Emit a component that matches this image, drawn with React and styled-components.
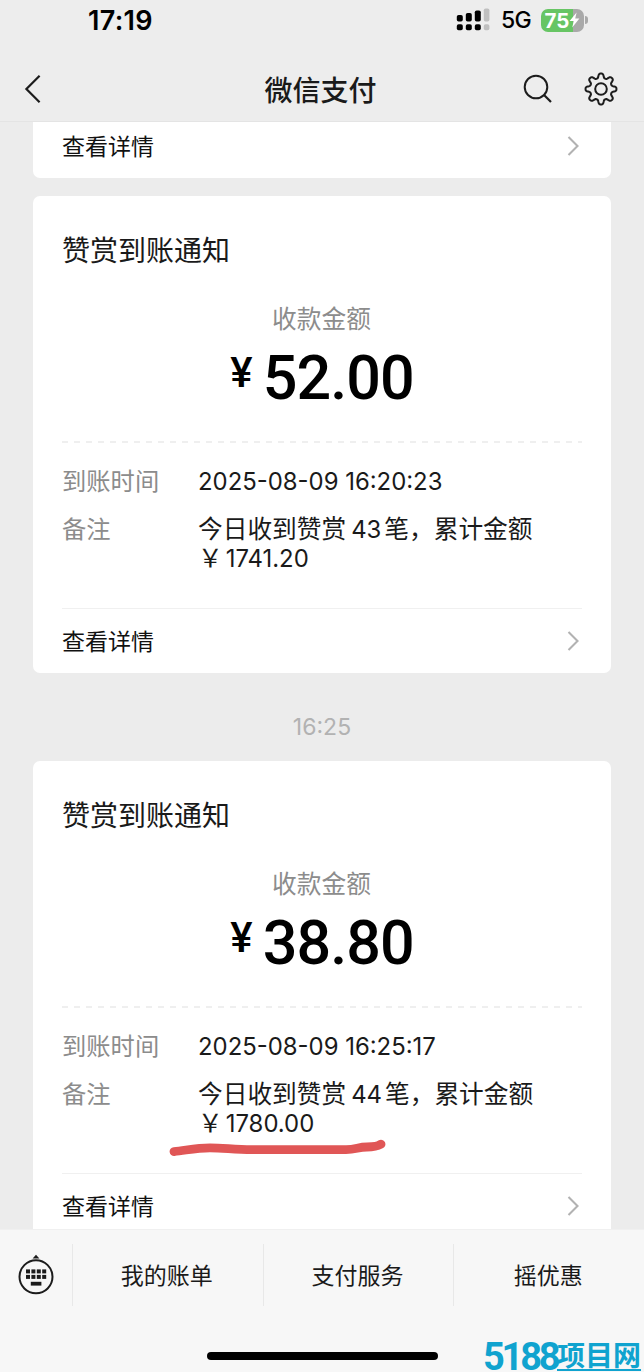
import React from 'react';
import styled, { createGlobalStyle } from 'styled-components';

const notices = [
  {
    id: 1,
    amount: '52.00',
    time: '2025-08-09 16:20:23',
    count: '43',
    total: '1741.20',
  },
  {
    id: 2,
    stamp: '16:25',
    amount: '38.80',
    time: '2025-08-09 16:25:17',
    count: '44',
    total: '1780.00',
    marked: true,
  },
];

const menus = ['我的账单', '支付服务', '摇优惠'];

// eight rounded teeth around the centre
const gearPath = () => {
  const points = [];
  for (let i = 0; i < 160; i++) {
    const a = (i / 160) * Math.PI * 2;
    const r = 13.3 + 2.3 * Math.tanh(1.7 * Math.cos(8 * a));
    points.push(
      `${(18 + r * Math.cos(a)).toFixed(2)} ${(18 + r * Math.sin(a)).toFixed(2)}`
    );
  }
  return `M${points.join('L')}Z`;
};

const SignalIcon = () => (
  <svg width='34' height='24' viewBox='0 0 34 24'>
    <rect x='0.8' y='7' width='6' height='6.6' rx='1.8' />
    <rect x='9.8' y='5' width='6' height='8.6' rx='1.8' />
    <rect x='18.8' y='2.4' width='6' height='11.2' rx='1.8' />
    <rect x='27.8' y='0.4' width='5.6' height='13.2' rx='1.8' fill='#bfbfbf' />
    <rect x='0.8' y='16.2' width='6' height='6' rx='1.8' />
    <rect x='9.8' y='16.2' width='6' height='6' rx='1.8' />
    <rect x='18.8' y='16.2' width='6' height='6' rx='1.8' />
    <rect x='27.8' y='16.2' width='5.6' height='6' rx='1.8' fill='#bfbfbf' />
  </svg>
);

const BoltIcon = () => (
  <svg width='11' height='16' viewBox='0 0 11 16'>
    <path d='M7.6 0.5L0.6 9h4.2L3.2 15.5L10.4 6.6H6.2Z' fill='#fff' />
  </svg>
);

const BackIcon = () => (
  <svg width='18' height='32' viewBox='0 0 18 32' fill='none'>
    <path d='M15.6 2.8L2.4 16L15.6 29.2' stroke='#1c1c1c' strokeWidth='2.2' />
  </svg>
);

const SearchIcon = () => (
  <svg width='30' height='30' viewBox='0 0 30 30' fill='none'>
    <circle cx='13' cy='13' r='11.3' stroke='#1c1c1c' strokeWidth='2' />
    <path d='M20.8 20.8L28 28' stroke='#1c1c1c' strokeWidth='2.2' />
  </svg>
);

const GearIcon = () => (
  <svg width='36' height='36' viewBox='0 0 36 36' fill='none'>
    <path
      d={gearPath()}
      stroke='#1c1c1c'
      strokeWidth='2'
      strokeLinejoin='round'
    />
    <circle cx='18' cy='18' r='5.8' stroke='#1c1c1c' strokeWidth='2' />
  </svg>
);

const ArrowIcon = () => (
  <svg width='14' height='22' viewBox='0 0 14 22' fill='none'>
    <path d='M2.5 2L11.5 11L2.5 20' stroke='#b2b2b2' strokeWidth='2.1' />
  </svg>
);

const KeyboardIcon = () => (
  <svg width='36' height='42' viewBox='0 0 36 42' fill='none'>
    <path d='M14.6 4.4L18 0.8L21.4 4.4Z' fill='#1c1c1c' />
    <circle cx='18' cy='22.8' r='16.5' stroke='#1c1c1c' strokeWidth='2' />
    {[8, 13.4, 18.8, 24.2].map((x) => (
      <g key={x} fill='#1c1c1c'>
        <rect x={x} y='15.4' width='4' height='4' />
        <rect x={x} y='20.9' width='4' height='4' />
      </g>
    ))}
    <rect x='12.8' y='27.8' width='10.6' height='3.8' fill='#1c1c1c' />
  </svg>
);

const App = () => {
  return (
    <>
      <GlobalStyle />
      <Screen>
        <Header>
          <StatusBar>
            <Clock>17:19</Clock>
            <StatusRight>
              <SignalIcon />
              <Network>5G</Network>
              <Battery>
                75
                <BoltIcon />
              </Battery>
              <BatteryCap />
            </StatusRight>
          </StatusBar>
          <NavBar>
            <NavSide>
              <BackIcon />
            </NavSide>
            <Title>微信支付</Title>
            <NavSide $end>
              <SearchIcon />
              <GearIcon />
            </NavSide>
          </NavBar>
        </Header>
        <List>
          <Card>
            <DetailLink>
              <DetailText>查看详情</DetailText>
              <ArrowIcon />
            </DetailLink>
          </Card>
          {notices.map((n) => (
            <React.Fragment key={n.id}>
              {n.stamp && <Stamp>{n.stamp}</Stamp>}
              <Card>
                <CardTitle>赞赏到账通知</CardTitle>
                <AmountLabel>收款金额</AmountLabel>
                <Amount>
                  <Yen>¥</Yen>
                  {n.amount}
                </Amount>
                <Dashes />
                <Fields>
                  <Label>到账时间</Label>
                  <Value>
                    <Digits>{n.time}</Digits>
                  </Value>
                  <Label>备注</Label>
                  <Value>
                    今日收到赞赏<Count>{n.count}</Count>笔，累计金额
                    <br />￥<Total>{n.total}</Total>
                    {n.marked && (
                      <Marker width='220' height='20' viewBox='0 0 220 20'>
                        <path
                          d='M6 12.6C18 11.4 28 8.8 42 8.8C56 8.8 66 10.6 84 10.6H178C188 10.6 190 8 199 8C207 8 209 7.4 213 5.2'
                          stroke='#e05656'
                          strokeWidth='8.8'
                          strokeLinecap='round'
                          fill='none'
                        />
                      </Marker>
                    )}
                  </Value>
                </Fields>
                <DetailLink $line>
                  <DetailText>查看详情</DetailText>
                  <ArrowIcon />
                </DetailLink>
              </Card>
            </React.Fragment>
          ))}
        </List>
        <Footer>
          <Tabs>
            <KeyboardTab>
              <KeyboardIcon />
            </KeyboardTab>
            {menus.map((m) => (
              <Tab key={m}>{m}</Tab>
            ))}
          </Tabs>
          <HomeBar />
        </Footer>
        <Watermark>
          <WaterDigits>5188</WaterDigits>
          <WaterName>项目网</WaterName>
        </Watermark>
      </Screen>
    </>
  );
};

const GlobalStyle = createGlobalStyle`
  * {
    box-sizing: border-box;
  }

  body {
    margin: 0;
    background: #ececec;
    font-family: 'Noto Sans CJK SC', sans-serif;
    color: #1a1a1a;
  }

  svg {
    display: block;
    flex-shrink: 0;
  }
`;

const Screen = styled.div`
  position: relative;
  display: flex;
  flex-direction: column;
  width: 644px;
  height: 1372px;
  overflow: hidden;
  background: #ececec;
`;

const Header = styled.div`
  height: 122px;
  flex-shrink: 0;
  background: #ededed;
  border-bottom: 1px solid #e4e4e4;
`;

const StatusBar = styled.div`
  display: flex;
  justify-content: space-between;
  align-items: center;
  height: 40px;
  padding: 0 56px 0 88px;
  font-family: Inter, sans-serif;
  color: #000;
`;

const Clock = styled.div`
  font-size: 27px;
  font-weight: 600;
  letter-spacing: 0.3px;
`;

const StatusRight = styled.div`
  display: flex;
  align-items: center;
`;

const Network = styled.div`
  margin-left: 11px;
  width: 40px;
  font-size: 23px;
  font-weight: 500;
  letter-spacing: -0.8px;
`;

const Battery = styled.div`
  display: flex;
  align-items: center;
  justify-content: center;
  width: 43px;
  height: 23px;
  border-radius: 7px;
  background: linear-gradient(90deg, #67c564 75%, #a9a9a9 75%);
  color: #fff;
  font-size: 20.5px;
  font-weight: 700;
  line-height: 23px;
`;

const BatteryCap = styled.div`
  width: 3px;
  height: 8px;
  margin-left: 1px;
  border-radius: 0 4px 4px 0;
  background: #a9a9a9;
`;

const NavBar = styled.div`
  display: flex;
  align-items: center;
  height: 81px;
  padding: 17px 25px 0 24px;
`;

const NavSide = styled.div`
  display: flex;
  align-items: center;
  justify-content: ${(props) => (props.$end ? 'flex-end' : 'flex-start')};
  gap: 30px;
  flex: 1;
`;

const Title = styled.div`
  margin: 0 1px 0 -1px;
  font-size: 28px;
  font-weight: 500;
  line-height: 40px;
`;

const List = styled.div`
  flex: 1;
  min-height: 0;
  overflow: hidden;
  padding: 0 33px;

  > :first-child {
    margin-top: -9px;
    margin-bottom: 18px;
  }
`;

const Card = styled.div`
  padding: 0 29px;
  border-radius: 7px;
  background: #fff;
`;

const CardTitle = styled.div`
  padding-top: 33px;
  font-size: 28px;
  line-height: 40px;
`;

const AmountLabel = styled.div`
  margin-top: 30px;
  padding-right: 1px;
  text-align: center;
  font-size: 24.7px;
  line-height: 36px;
  color: #8c8c8c;
`;

const Amount = styled.div`
  display: flex;
  justify-content: center;
  height: 106px;
  padding-top: 11px;
  font-family: Roboto, sans-serif;
  font-size: 61px;
  font-weight: 500;
  line-height: 64px;
  letter-spacing: -0.9px;
  color: #000;
`;

const Yen = styled.span`
  margin-right: 11px;
  font-size: 42px;
  line-height: 53px;
`;

const Dashes = styled.div`
  height: 2px;
  background: repeating-linear-gradient(90deg, #efefef 0 6px, #fff 6px 12px);
`;

const Fields = styled.div`
  display: grid;
  grid-template-columns: 136px 1fr;
  row-gap: 19px;
  height: 165px;
  padding-top: 22px;
  align-content: start;
  font-size: 24.7px;
  line-height: 29px;
`;

const Label = styled.div`
  font-size: 24.3px;
  color: #8c8c8c;
`;

const Value = styled.div`
  position: relative;
  white-space: nowrap;
`;

const Digits = styled.span`
  font-family: Inter, sans-serif;
  font-size: 23.9px;
  line-height: 16px;
`;

const Count = styled(Digits)`
  margin: 0 3px 0 5px;
`;

const Total = styled(Digits)`
  margin-left: 3px;
`;

const Marker = styled.svg`
  position: absolute;
  left: -30px;
  top: 61px;
`;

const DetailLink = styled.div`
  display: flex;
  align-items: center;
  justify-content: space-between;
  height: 65px;
  padding-right: 2px;
  padding-bottom: 1px;
  border-top: 1px solid ${(props) => (props.$line ? '#f0f0f0' : '#fff')};
  color: #111;
`;

const DetailText = styled.span`
  padding-bottom: 2px;
  font-size: 23px;
  line-height: 32px;
`;

const Stamp = styled.div`
  height: 88px;
  padding-top: 19px;
  text-align: center;
  font-family: Inter, sans-serif;
  font-size: 23px;
  line-height: 70px;
  color: #b2b2b2;
`;

const Footer = styled.div`
  display: flex;
  flex-direction: column;
  align-items: center;
  height: 143px;
  flex-shrink: 0;
  border-top: 1px solid #f0f0f0;
  background: #f7f7f7;
`;

const Tabs = styled.div`
  display: flex;
  align-items: center;
  width: 100%;
  height: 90px;
`;

const KeyboardTab = styled.div`
  display: flex;
  justify-content: center;
  width: 72px;
`;

const Tab = styled.div`
  flex: 1;
  height: 62px;
  padding-right: 2px;
  border-left: 1px solid #e8e8e8;
  text-align: center;
  font-size: 23px;
  line-height: 60px;
`;

const HomeBar = styled.div`
  width: 231px;
  height: 8px;
  margin-top: 32px;
  border-radius: 4px;
  background: #000;
`;

const Watermark = styled.div`
  position: absolute;
  right: 3px;
  bottom: 1px;
  display: flex;
  align-items: flex-end;
  color: #10a3cf;
`;

const WaterDigits = styled.div`
  width: 74px;
  font-family: Roboto, sans-serif;
  font-size: 38px;
  font-weight: 700;
  line-height: 27px;
  letter-spacing: -3.2px;
`;

const WaterName = styled.div`
  border-bottom: 2px solid #10a3cf;
  font-size: 28px;
  font-weight: 700;
  line-height: 22px;
  height: 28px;
`;

export default App;
